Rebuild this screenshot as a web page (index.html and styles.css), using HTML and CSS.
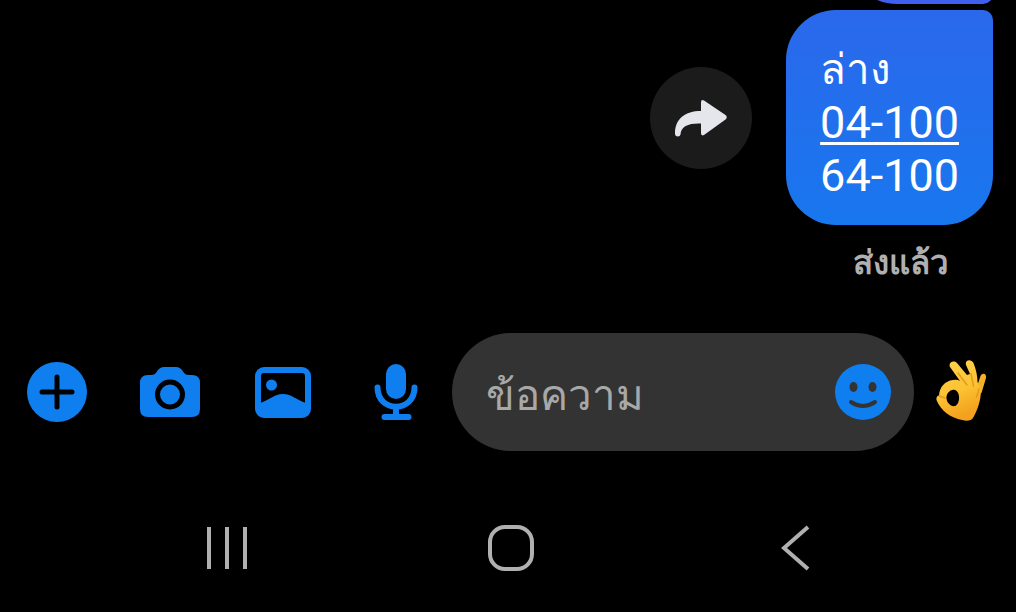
FILE: index.html
```
<!DOCTYPE html>
<html lang="th">
<head>
  <meta charset="UTF-8" />
  <meta name="viewport" content="width=device-width, initial-scale=1" />
  <title>แชท</title>
  <link rel="stylesheet" href="styles.css">
</head>
<body>

  <main class="chat">
    <div class="bubble bubble-previous"></div>
    <div class="message">
      <button class="forward" type="button" aria-label="ส่งต่อ">
        <svg width="52" height="38" viewBox="0 0 52 38">
          <path d="M26 3.500Q26 0 29 1.500L50.500 16Q53 18.200 50.500 20.500L29 36Q26 37.500 26 34V24.500C14 24 6 27 5.500 35.500Q5 37.500 3 37.500Q0 37.500 0 34.500C0 20 10 12 26 12Z" fill="#e4e6eb"/>
        </svg>
      </button>
      <div class="bubble">
        <span class="thai">ล่าง</span><br>
        <a href="tel:04-100">04-100</a><br>
        64-100
      </div>
    </div>
    <div class="status">ส่งแล้ว</div>
  </main>

  <form class="composer">
    <button class="tool" type="button" aria-label="เพิ่ม">
      <svg width="62" height="62" viewBox="0 0 62 62">
        <circle cx="31" cy="31" r="30" fill="#0f7ff0"/>
        <path d="M31 16V46M16 31H46" stroke="#000" stroke-width="5" stroke-linecap="round"/>
      </svg>
    </button>
    <button class="tool" type="button" aria-label="กล้อง">
      <svg width="62" height="62" viewBox="0 0 62 62">
        <path d="M9 14H12Q16 14 18 10.500Q20.500 6 25 6H37Q41.500 6 44 10.500Q46 14 50 14H53Q61 14 61 22V48Q61 56 53 56H9Q1 56 1 48V22Q1 14 9 14Z" fill="#0f7ff0"/>
        <circle cx="31" cy="33.500" r="12.500" fill="none" stroke="#000" stroke-width="5"/>
      </svg>
    </button>
    <button class="tool" type="button" aria-label="รูปภาพ">
      <svg width="62" height="62" viewBox="0 0 62 62">
        <rect x="6" y="9" width="50" height="45" rx="6" fill="none" stroke="#0f7ff0" stroke-width="6"/>
        <circle cx="19.500" cy="24" r="5.500" fill="#0f7ff0"/>
        <path d="M8 42C18 39 22 33 31 33S44 39 54 42V53H8Z" fill="#0f7ff0"/>
      </svg>
    </button>
    <button class="tool" type="button" aria-label="ไมโครโฟน">
      <svg width="62" height="62" viewBox="0 0 62 62">
        <rect x="21" y="3" width="20" height="35" rx="10" fill="#0f7ff0"/>
        <path d="M12.500 26.500C12.500 52 49.500 52 49.500 26.500M31 46V55M19.500 56H43.500" fill="none" stroke="#0f7ff0" stroke-width="6" stroke-linecap="round"/>
      </svg>
    </button>
    <div class="field">
      <input class="field-input" type="text" placeholder="ข้อความ" aria-label="ข้อความ">
      <button class="emoji" type="button" aria-label="อีโมจิ">
        <svg width="56" height="58" viewBox="0 0 56 58">
          <circle cx="28" cy="29" r="28" fill="#0f7ff0"/>
          <ellipse cx="18.500" cy="24" rx="4" ry="5" fill="#333"/>
          <ellipse cx="37.500" cy="24" rx="4" ry="5" fill="#333"/>
          <path d="M16 39Q28 47 40 39" fill="none" stroke="#333" stroke-width="4" stroke-linecap="round"/>
        </svg>
      </button>
    </div>
    <button class="reaction" type="button" aria-label="โอเค">
      <svg width="52" height="64" viewBox="0 0 52 64">
        <defs>
          <linearGradient id="skin" x1="0" y1="0" x2="0.300" y2="1">
            <stop offset="0" stop-color="#ffd54d"/>
            <stop offset="0.600" stop-color="#fcc233"/>
            <stop offset="1" stop-color="#f3a11e"/>
          </linearGradient>
        </defs>
        <path d="M45 18.500Q46 14.500 49 14.800Q51.500 15.500 51 19L46.500 34L40 33Z" fill="#f5b02b"/>
        <path d="M15 8C13 4 18 0.500 22 4L32 16L35 15L31 6C29.500 1 36 -0.500 38.500 4C41 10 42.500 17 42.500 23L46 31C46 42 42 52 38 59Q35 63 27 61C16 59 6 52 1.500 41Q1 37 4 36.500C4.500 28 10 22 18 21Q22 20 25 22Z" fill="url(#skin)"/>
        <path d="M20 31C15 30 11 35 11.500 39.500C12 44 16 48 20 47C25 46 26 33 20 31Z" fill="#000"/>
        <path d="M23 14L32 26M36 15L38.500 27M44 30L41.500 38M4.500 37L10 39" fill="none" stroke="#e49b1e" stroke-width="1.500" stroke-linecap="round"/>
      </svg>
    </button>
  </form>

  <nav class="system-nav">
    <button type="button" aria-label="แอปล่าสุด">
      <svg width="46" height="48" viewBox="0 0 46 48">
        <path d="M5 3V45M23 3V45M41 3V45" stroke="#b0b0b0" stroke-width="4"/>
      </svg>
    </button>
    <button type="button" aria-label="หน้าหลัก">
      <svg width="48" height="48" viewBox="0 0 48 48">
        <rect x="3" y="3" width="42" height="42" rx="15" fill="none" stroke="#b0b0b0" stroke-width="4"/>
      </svg>
    </button>
    <button type="button" aria-label="กลับ">
      <svg width="30" height="48" viewBox="0 0 30 48">
        <path d="M27 3L3 24L27 45" fill="none" stroke="#b0b0b0" stroke-width="4"/>
      </svg>
    </button>
  </nav>

</body>
</html>
```
FILE: styles.css
```
* {
  box-sizing: border-box;
}

body {
  display: flex;
  flex-direction: column;
  height: 100vh;
  margin: 0;
  background: #000;
  color: #fff;
  font-family: Roboto, "Noto Sans", sans-serif;
}

button {
  display: flex;
  align-items: center;
  justify-content: center;
  padding: 0;
  border: none;
  background: none;
  cursor: pointer;
}

.chat {
  display: flex;
  flex: 1;
  flex-direction: column;
  align-items: flex-end;
  justify-content: flex-end;
  min-height: 0;
  padding: 0 23px 50px;
  overflow: hidden;
}

.message {
  display: flex;
  align-items: center;
  gap: 34px;
}

.bubble {
  padding: 32px 34px 23px;
  border-radius: 50px 10px 50px 50px;
  background: linear-gradient(#2b68eb, #1877ee);
  font-size: 45px;
  line-height: 53px;
}

.bubble a {
  color: inherit;
  text-decoration-thickness: 3px;
  text-underline-offset: 4px;
}

.thai {
  font-size: 42px;
}

.bubble-previous {
  flex-shrink: 0;
  width: 146px;
  height: 110px;
  margin-bottom: 6px;
  border-radius: 50px 10px 10px 50px;
  background: #415fee;
}

.forward {
  width: 102px;
  height: 102px;
  border-radius: 50%;
  background: #1b1b1b;
}

.status {
  margin-top: 18px;
  padding-right: 44px;
  color: #b0b0b3;
  font-size: 33px;
  font-weight: 600;
  line-height: 40px;
}

.composer {
  display: flex;
  align-items: center;
  margin: 0;
}

.tool {
  width: 113px;
  height: 118px;
}

.field {
  display: flex;
  flex: 1;
  align-items: center;
  min-width: 0;
  height: 118px;
  padding: 0 23px 0 34px;
  border-radius: 59px;
  background: #333;
}

.field-input {
  flex: 1;
  min-width: 0;
  height: 80px;
  padding: 6px 0 0;
  border: none;
  outline: none;
  background: none;
  color: #fff;
  font-family: inherit;
  font-size: 42px;
}

.field-input::placeholder {
  color: #a8a8a8;
  opacity: 1;
}

.reaction {
  width: 102px;
  height: 118px;
  padding: 0 8px 2px 0;
}

.system-nav {
  display: grid;
  grid-template-columns: repeat(3, 1fr);
  height: 128px;
  margin-top: 33px;
  padding: 0 78px 0 85px;
}
```
